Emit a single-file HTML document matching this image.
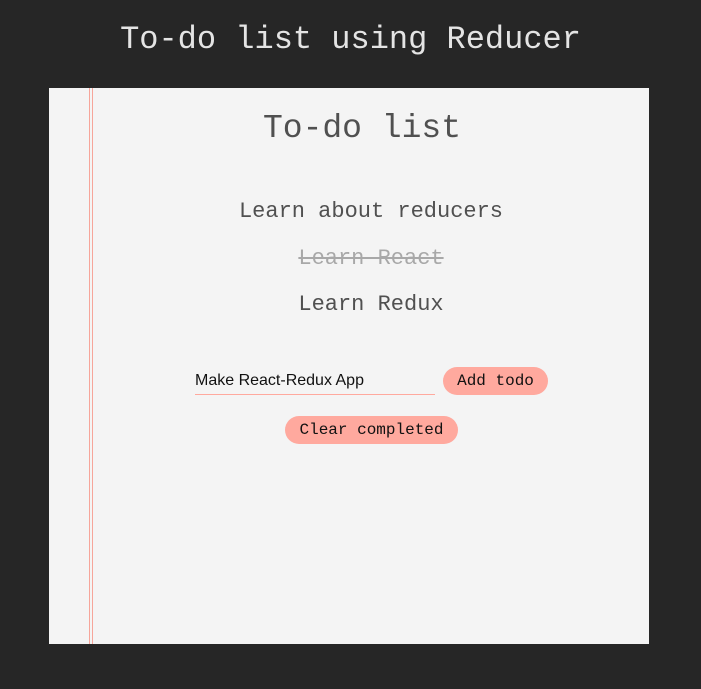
<!DOCTYPE html><html><head><style>
body{margin:0;background:#262626;width:701px;height:689px;position:relative;font-family:"Liberation Mono",monospace;overflow:hidden}
h1{position:absolute;top:20px;left:0;width:701px;text-align:center;margin:0;color:#e4e4e4;font-size:32px;font-weight:normal;line-height:40px}
.card{position:absolute;left:49px;top:88px;width:600px;height:556px;background:#f4f4f4}
.l{position:absolute;top:0;bottom:0;width:1px;background:#f6a59a}
.t{position:absolute;width:600px;text-align:center;color:#505050}
.btn{position:absolute;background:#ffa99e;border-radius:14px;height:28px;line-height:28px;text-align:center;font-size:16px;color:#111}
</style></head><body>
<h1>To-do list using Reducer</h1>
<div class="card">
<div class="l" style="left:40px"></div><div class="l" style="left:43px"></div>
<div class="t" style="top:19px;font-size:33px;line-height:44px;left:13px">To-do list</div>
<div class="t" style="top:110px;font-size:22px;line-height:28px;left:22px">Learn about reducers</div>
<div class="t" style="top:157px;font-size:22px;line-height:28px;left:22px;color:#a8a8a8;text-decoration:line-through">Learn React</div>
<div class="t" style="top:203px;font-size:22px;line-height:28px;left:22px">Learn Redux</div>
<div style="position:absolute;left:146px;top:281px;width:240px;height:25px;border-bottom:1px solid #ffa99e;font-family:'Liberation Sans',sans-serif;font-size:16px;line-height:24px;color:#111">Make React-Redux App</div>
<div class="btn" style="left:394px;top:279px;width:105px">Add todo</div>
<div class="btn" style="left:236px;top:328px;width:173px">Clear completed</div>
</div>
</body></html>
